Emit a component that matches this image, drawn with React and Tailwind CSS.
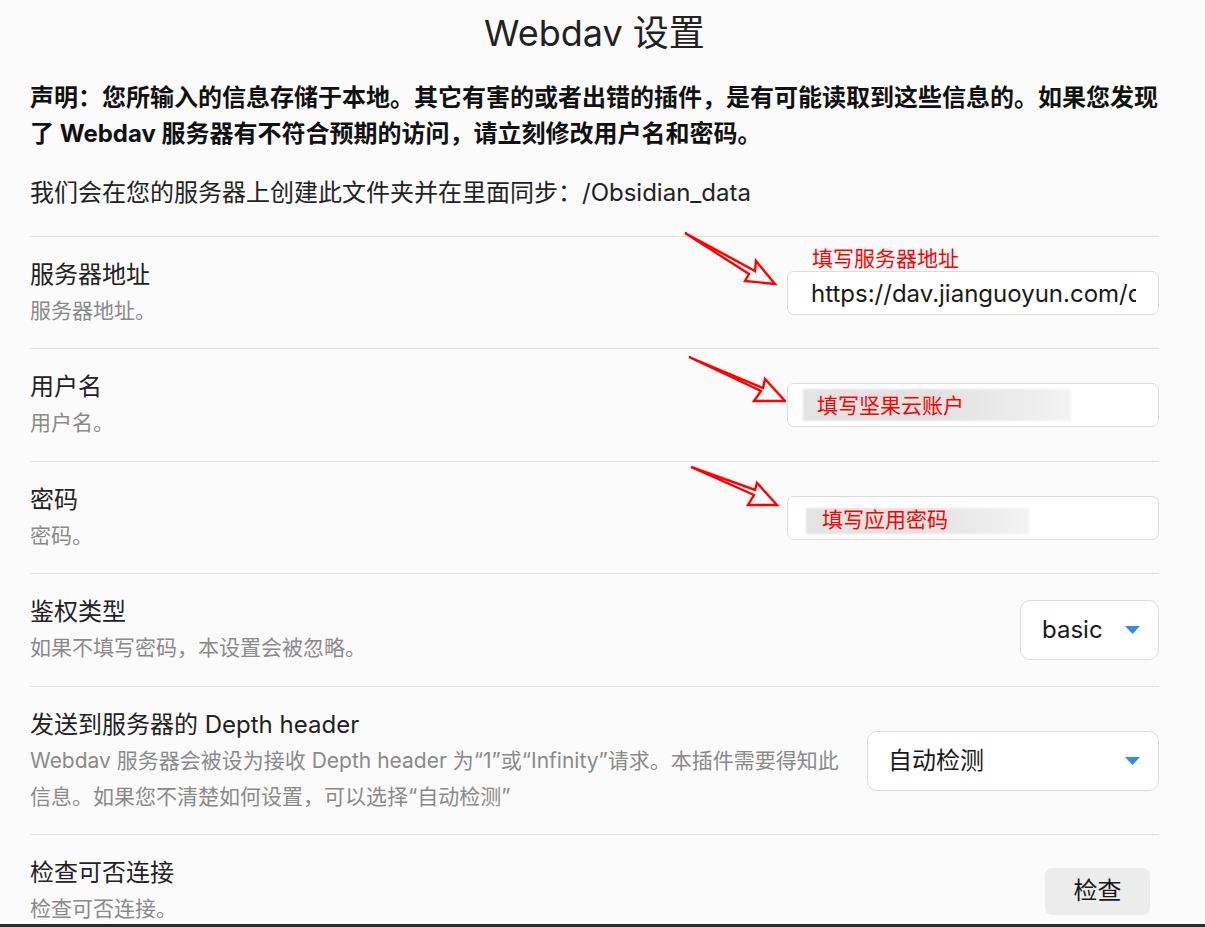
const FONT = { fontFamily: 'Inter, "Noto Sans CJK SC", sans-serif' }

function Arrow({ points, box }) {
  // box = [left, top, width, height] relative to the control
  const [left, top, w, h] = box
  return (
    <svg
      className="absolute pointer-events-none"
      style={{ left, top }}
      width={w}
      height={h}
      viewBox={`0 0 ${w} ${h}`}
    >
      <polygon points={points} fill="white" stroke="#ff0000" strokeWidth="2.4" strokeLinejoin="miter" />
    </svg>
  )
}

function Caret() {
  return (
    <svg width="15" height="8" viewBox="0 0 15 8" className="shrink-0">
      <path d="M0 0 H15 L7.5 8 Z" fill="#2f8ee8" />
    </svg>
  )
}

function Row({ label, desc, tall, children }) {
  return (
    <div
      className={`flex items-center border-t border-[#e2e2e2] pt-5 ${tall ? 'pb-5' : 'pb-[19px]'}`}
    >
      <div className="flex-1 min-w-0">
        <div className="text-[24px] leading-[36px] text-[#222]">{label}</div>
        <div className="text-[21px] leading-[36px] text-[#8a8a8a]">{desc}</div>
      </div>
      {children}
    </div>
  )
}

function TextBox({ value, children }) {
  return (
    <div className="relative ml-6 shrink-0">
      <input
        readOnly
        value={value}
        className="block w-[372px] h-[44px] bg-white border border-[#dcdcdc] rounded-[7px] pl-[23px] pr-[22px] text-[24px] text-[#1a1a1a] outline-none"
        style={FONT}
      />
      {children}
    </div>
  )
}

export default function App() {
  return (
    <div className="w-full h-[927px] flex flex-col bg-[#fbfbfb] overflow-hidden" style={FONT}>
      <div className="flex-1 overflow-hidden pl-[30px] pr-[46px]">
        <h1 className="pt-[10px] text-center text-[36px] leading-[46px] text-[#222] font-normal">
          Webdav 设置
        </h1>
        <p className="mt-[24px] text-[24px] leading-[36px] font-bold text-[#111] whitespace-nowrap">
          声明：您所输入的信息存储于本地。其它有害的或者出错的插件，是有可能读取到这些信息的。如果您发现
          <br />
          了 Webdav 服务器有不符合预期的访问，请立刻修改用户名和密码。
        </p>
        <p className="mt-[23px] mb-[25px] text-[24px] leading-[36px] text-[#222]">
          我们会在您的服务器上创建此文件夹并在里面同步：/Obsidian_data
        </p>

        <Row label="服务器地址" desc="服务器地址。">
          <TextBox value="https://dav.jianguoyun.com/dav/">
            <div className="absolute left-[25px] top-[-25px] text-[21px] leading-[26px] text-[#ff0000] whitespace-nowrap">
              填写服务器地址
            </div>
            <Arrow
              box={[-106, -42, 100, 62]}
              points="4,4 74,42 75,32 94,55 64,52 68,45"
            />
          </TextBox>
        </Row>

        <Row label="用户名" desc="用户名。" tall>
          <TextBox value="">
            <div className="absolute left-[16px] top-[6px] w-[268px] h-[32px] bg-gradient-to-r from-[#e4e4e4] via-[#e2e2e2] to-[#f3f3f3] blur-[1px]" />
            <div className="absolute left-[30px] top-[9px] text-[21px] leading-[28px] text-[#ff0000] whitespace-nowrap">
              填写坚果云账户
            </div>
            <Arrow
              box={[-101, -30, 100, 50]}
              points="3,4 77,35 79,26 99,48 68,48 75,38"
            />
          </TextBox>
        </Row>

        <Row label="密码" desc="密码。">
          <TextBox value="">
            <div className="absolute left-[19px] top-[12px] w-[223px] h-[26px] bg-gradient-to-r from-[#e4e4e4] via-[#e2e2e2] to-[#f3f3f3] blur-[1px]" />
            <div className="absolute left-[35px] top-[10px] text-[21px] leading-[28px] text-[#ff0000] whitespace-nowrap">
              填写应用密码
            </div>
            <Arrow
              box={[-100, -33, 96, 45]}
              points="4,4 68,27 70,20 90,42 61,42 67,32"
            />
          </TextBox>
        </Row>

        <Row label="鉴权类型" desc="如果不填写密码，本设置会被忽略。" tall>
          <div className="ml-6 shrink-0 w-[139px] h-[60px] bg-white border border-[#dcdcdc] rounded-[10px] flex items-center justify-between pl-[21px] pr-[18px]">
            <span className="text-[24px] text-[#1a1a1a]">basic</span>
            <Caret />
          </div>
        </Row>

        <Row
          label="发送到服务器的 Depth header"
          desc={
            <>
              Webdav 服务器会被设为接收 Depth header 为“1”或“Infinity”请求。本插件需要得知此
              <br />
              信息。如果您不清楚如何设置，可以选择“自动检测”
            </>
          }
        >
          <div className="ml-6 shrink-0 w-[292px] h-[60px] bg-white border border-[#dcdcdc] rounded-[10px] flex items-center justify-between pl-[20px] pr-[18px]">
            <span className="text-[24px] text-[#1a1a1a]">自动检测</span>
            <Caret />
          </div>
        </Row>

        <Row label="检查可否连接" desc="检查可否连接。">
          <button className="ml-6 mr-[9px] shrink-0 w-[105px] h-[47px] bg-[#ececec] rounded-[7px] text-[24px] text-[#1a1a1a]">
            检查
          </button>
        </Row>
      </div>
      <div className="h-[3px] bg-[#2b2b2b] shrink-0" />
    </div>
  )
}
